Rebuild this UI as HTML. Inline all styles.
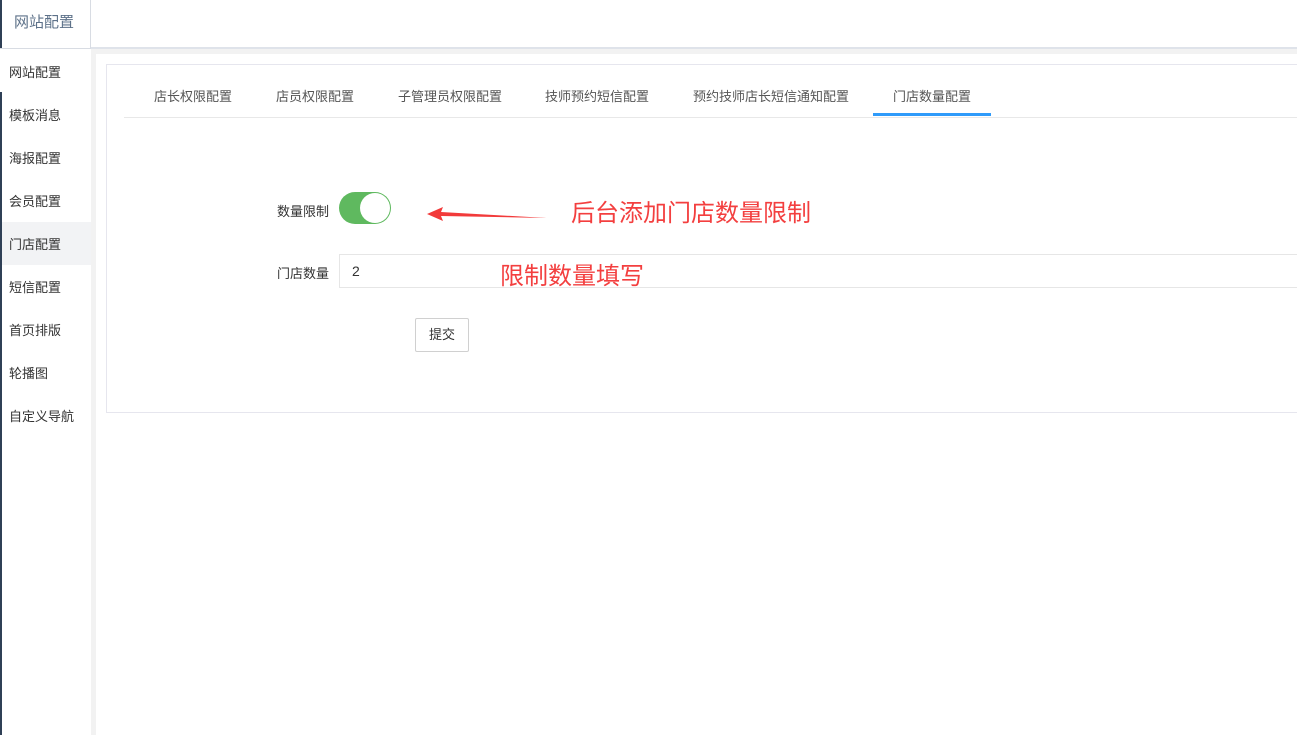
<!DOCTYPE html>
<html><head><meta charset="utf-8"><style>
*{margin:0;padding:0;box-sizing:border-box}
body{width:1297px;height:735px;position:relative;background:#fff;font-family:"Liberation Sans","Noto Sans CJK SC",sans-serif;color:#333;overflow:hidden}
.a{position:absolute;white-space:nowrap}
.side{font-size:13px;color:#333}
.tab{font-size:13px;color:#555;top:86px}
</style></head><body>
<div class="a" style="left:0;top:0;width:2px;height:735px;background:#2f4056"></div>
<div class="a" style="left:0;top:0;width:91px;height:49px;border-right:1px solid #d8dce3;border-bottom:1px solid #d8dce3"></div>
<div class="a" style="left:14px;top:11px;font-size:15px;color:#5d7189">网站配置</div>
<div class="a" style="left:91px;top:47px;width:1206px;height:2px;background:#dfe3ea"></div>
<div class="a" style="left:91px;top:49px;width:1206px;height:5px;background:#f2f2f2"></div>
<div class="a" style="left:91px;top:49px;width:5px;height:686px;background:#f2f2f2"></div>
<div class="a" style="left:0;top:49px;width:2px;height:43px;background:#fff"></div>
<div class="a" style="left:2px;top:222px;width:89px;height:43px;background:#f2f3f5"></div>
<div class="a side" style="left:9px;top:62px">网站配置</div>
<div class="a side" style="left:9px;top:105px">模板消息</div>
<div class="a side" style="left:9px;top:148px">海报配置</div>
<div class="a side" style="left:9px;top:191px">会员配置</div>
<div class="a side" style="left:9px;top:234px">门店配置</div>
<div class="a side" style="left:9px;top:277px">短信配置</div>
<div class="a side" style="left:9px;top:320px">首页排版</div>
<div class="a side" style="left:9px;top:363px">轮播图</div>
<div class="a side" style="left:9px;top:406px">自定义导航</div>
<div class="a" style="left:106px;top:64px;width:1200px;height:349px;border:1px solid #e6e6ee"></div>
<div class="a" style="left:124px;top:117px;width:1180px;height:1px;background:#e8e8e8"></div>
<div class="a" style="left:873px;top:113px;width:118px;height:3px;background:#2f9bfa"></div>
<div class="a tab" style="left:154px">店长权限配置</div>
<div class="a tab" style="left:276px">店员权限配置</div>
<div class="a tab" style="left:398px">子管理员权限配置</div>
<div class="a tab" style="left:545px">技师预约短信配置</div>
<div class="a tab" style="left:693px">预约技师店长短信通知配置</div>
<div class="a tab" style="left:893px">门店数量配置</div>
<div class="a" style="left:277px;top:201px;font-size:13px">数量限制</div>
<div class="a" style="left:339px;top:192px;width:52px;height:32px;border-radius:16px;background:#5fb95f"></div>
<div class="a" style="left:360px;top:193px;width:30px;height:30px;border-radius:50%;background:#fff"></div>
<svg class="a" style="left:425px;top:204px" width="125" height="20"><polygon points="2,10 18,3 16,8 122,14 16,12 18,17" fill="#f23a3a"/></svg>
<div class="a" style="left:571px;top:193px;font-size:24px;color:#f33f3f">后台添加门店数量限制</div>
<div class="a" style="left:277px;top:263px;font-size:13px">门店数量</div>
<div class="a" style="left:339px;top:254px;width:970px;height:34px;border:1px solid #e6e6e6"></div>
<div class="a" style="left:352px;top:263px;font-size:14px">2</div>
<div class="a" style="left:500px;top:256px;font-size:24px;color:#f33f3f">限制数量填写</div>
<div class="a" style="left:415px;top:318px;width:54px;height:34px;border:1px solid #d0d0d0;border-radius:2px;font-size:13px;text-align:center;line-height:32px">提交</div>
</body></html>
